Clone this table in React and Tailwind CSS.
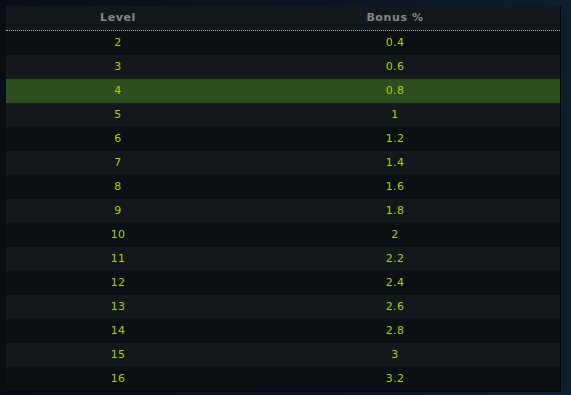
import React from "react";

const rows = [
  [2, "0.4"],
  [3, "0.6"],
  [4, "0.8"],
  [5, "1"],
  [6, "1.2"],
  [7, "1.4"],
  [8, "1.6"],
  [9, "1.8"],
  [10, "2"],
  [11, "2.2"],
  [12, "2.4"],
  [13, "2.6"],
  [14, "2.8"],
  [15, "3"],
  [16, "3.2"],
];

const App = () => {
  return (
    <div
      className="w-[571px] h-[395px] overflow-hidden bg-gradient-to-r from-[#080d14] via-[#0b141e] to-[#0f1e2c] pl-[6px] pt-[6px]"
      style={{ fontFamily: '"DejaVu Sans", Verdana, sans-serif' }}
    >
      <div className="w-[555px] bg-[#13181c] border-r border-b border-[#020304]">
        <div className="flex h-[25px] border-b border-dotted border-[#a3a3a3] text-[11px] font-bold tracking-[0.6px] text-[#858585]">
          <div className="w-[224px] flex items-center justify-center pt-[1px]">Level</div>
          <div className="flex-1 flex items-center justify-center pt-[1px]">Bonus %</div>
        </div>
        {rows.map(([level, bonus], i) => (
          <div
            key={level}
            className={
              "flex h-[24px] text-[11px] tracking-[0.3px] text-[#a2d10c] " +
              (level === 4 ? "bg-[#2d4e1f]" : i % 2 === 0 ? "bg-[#0c0f13]" : "bg-[#13181c]")
            }
          >
            <div className="w-[224px] flex items-center justify-center">{level}</div>
            <div className="flex-1 flex items-center justify-center">{bonus}</div>
          </div>
        ))}
      </div>
    </div>
  );
};

export default App;
